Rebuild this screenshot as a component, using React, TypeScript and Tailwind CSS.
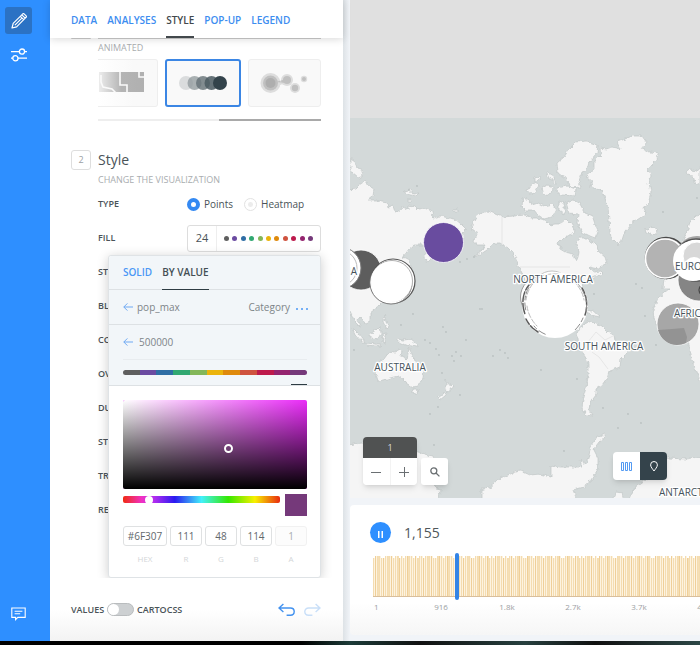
import React, { useState } from "react";

const palette = [
  "#5f5f5f", "#6b4ba1", "#2f6ea5", "#31a872", "#83b75a", "#ebb40c",
  "#df8a0c", "#cf533f", "#bd1a4c", "#94246f", "#75397a",
];

const tabs = ["DATA", "ANALYSES", "STYLE", "POP-UP", "LEGEND"];
const moreRows = [
  { short: "ST", name: "Stroke" },
  { short: "BL", name: "Blending" },
  { short: "CO", name: "Column" },
  { short: "OV", name: "Overlap" },
  { short: "DU", name: "Duration" },
  { short: "ST", name: "Steps" },
  { short: "TR", name: "Trails" },
  { short: "RE", name: "Resolution" },
];

function Rail() {
  return (
    <nav className="flex w-[50px] shrink-0 flex-col items-start bg-[#2e8fff] pt-[7px] pb-5 pl-[5px]">
      <button aria-label="Edit" className="flex h-[27px] w-[27px] items-center justify-center rounded-[3px] bg-[#2b72c4]">
        <svg width="16" height="16" viewBox="0 0 16 16" fill="none" stroke="white" strokeWidth="1.2" strokeLinejoin="round">
          <path d="M1 15l1.2-4.6L10.8 1.8l3.4 3.4L5.6 13.8zM9.3 3.3l3.4 3.4M10.8 1.8l.9-.9c.5-.4 1-.4 1.4 0l2 2c.4.4.4 1 0 1.4l-.9.9M3.900 12.100l7-7" />
        </svg>
      </button>
      <button aria-label="Settings" className="mt-[7px] flex h-[27px] w-[27px] items-center justify-center">
        <svg width="16" height="14" viewBox="0 0 16 14" fill="none" stroke="white" strokeWidth="1.3">
          <circle cx="11" cy="3.6" r="2.6" />
          <circle cx="4.4" cy="10.2" r="2.6" />
          <path d="M0 3.6h8.4M13.6 3.6H16M0 10.2h1.8M7 10.2h9" />
        </svg>
      </button>
      <button aria-label="Feedback" className="mt-auto flex w-[27px] items-center justify-center">
        <svg width="15" height="14" viewBox="0 0 15 14" fill="none" stroke="white" strokeWidth="1.1">
          <path d="M.8 1h13.4v9.4H6.8L4.6 12.6v-2.2H.8zM3.6 4.3h7.8M3.6 6.8h5.6" />
        </svg>
      </button>
    </nav>
  );
}

function AggregationCards() {
  return (
    <div className="mt-1 ml-[27px] flex h-12 gap-[7px]">
      <button aria-label="Administrative areas" className="h-full w-[60px] shrink-0 rounded-r-[3px] border border-l-0 border-[#eeeeee] bg-linear-to-r from-white to-[#f9f9f9] to-60%">
        <svg width="58" height="46" viewBox="0 0 58 46">
          <defs>
            <linearGradient id="areas" x1="0" x2="1" y1="0" y2="0">
              <stop offset="0" stopColor="#ececec" />
              <stop offset="0.5" stopColor="#b4b4b4" />
              <stop offset="1" stopColor="#b0b0b0" />
            </linearGradient>
          </defs>
          <path d="M1 12h45v20H1z" fill="url(#areas)" />
          <path d="M22 11v14h7v8M3 15v7l2 5 9 2 4 4M41 11v6h6" fill="none" stroke="#fafafa" strokeWidth="1.6" />
        </svg>
      </button>
      <button aria-label="Animated" className="flex h-full flex-1 items-center justify-center rounded-[3px] border-2 border-[#3b86e4] bg-[#f9f9f9]">
        <svg width="48" height="14" viewBox="0 0 48 14">
          <circle cx="7" cy="7" r="7" fill="#dadcdd" />
          <circle cx="15.5" cy="7" r="7" fill="#8d9799" opacity=".75" />
          <circle cx="24" cy="7" r="7" fill="#647176" opacity=".8" />
          <circle cx="32.5" cy="7" r="7" fill="#4b5b62" opacity=".85" />
          <circle cx="41" cy="7" r="7" fill="#33434b" />
        </svg>
      </button>
      <button aria-label="Pixel" className="flex h-full flex-1 items-center justify-center rounded-[3px] border border-[#eeeeee] bg-[#f9f9f9]">
        <svg width="48" height="22" viewBox="0 0 48 22" fill="#8c8c8c">
          <g opacity=".25">
            <circle cx="10.500" cy="11" r="10" />
            <circle cx="27" cy="8" r="6" />
            <circle cx="35" cy="16" r="5" />
            <circle cx="44" cy="7" r="3.2" />
            <path d="M18 9q4 3 6-1v5q-3-2-6 2z" />
          </g>
          <g opacity=".35">
            <circle cx="10.500" cy="11" r="7.5" />
            <circle cx="27" cy="8" r="4" />
            <circle cx="35" cy="16" r="3.2" />
            <circle cx="44" cy="7" r="2" />
            <path d="M16 10l10-3v4z" />
          </g>
          <circle cx="10.500" cy="11" r="5" opacity=".35" />
        </svg>
      </button>
    </div>
  );
}

function BackArrow() {
  return (
    <svg width="10" height="8" viewBox="0 0 10 8" fill="none" stroke="#6fa9f3" strokeWidth="1">
      <path d="M10 4H.8M4.4.4L.8 4l3.6 3.6" />
    </svg>
  );
}

const colorFields = [
  { label: "HEX", value: "#6F307", box: "w-11" },
  { label: "R", value: "111", box: "w-8" },
  { label: "G", value: "48", box: "w-8" },
  { label: "B", value: "114", box: "w-8" },
  { label: "A", value: "1", box: "w-8" },
];

function ColorPopup() {
  const [hue, setHue] = useState(15);
  return (
    <div className="absolute top-full right-0 z-10 w-[213px] rounded-[3px] border border-[#dfe3e6] bg-white font-normal shadow-[0_2px_12px_rgba(0,0,0,0.2)]">
      <div className="rounded-t-[3px] bg-[#f2f6f9]">
        <div className="flex h-[34px] gap-[10px] border-b border-[#dde1e4] pr-[13px] pl-[14px] text-[10px] font-semibold">
          <button className="text-[#4a97f5]">SOLID</button>
          <button className="-mb-px border-b border-[#2e3c43] text-[#434e54]">BY VALUE</button>
        </div>
        <div className="flex h-[35px] items-center border-b border-[#dde1e4] pr-3 pl-[14px] text-[10px] text-[#7d8488]">
          <button aria-label="Back to column"><BackArrow /></button>
          <span className="ml-1 flex-1">pop_max</span>
          <span>Category</span>
          <button aria-label="More options" className="mt-1 ml-[6px] flex gap-[3px]">
            <i className="h-[2px] w-[2px] rounded-full bg-[#4a97f5]" />
            <i className="h-[2px] w-[2px] rounded-full bg-[#4a97f5]" />
            <i className="h-[2px] w-[2px] rounded-full bg-[#4a97f5]" />
          </button>
        </div>
        <div className="mr-[13px] ml-[14px] flex h-[35px] items-center gap-[6px] border-b border-[#e8ecef] text-[10px] text-[#7d8488]">
          <button aria-label="Back to values"><BackArrow /></button>
          500000
        </div>
        <div className="flex h-[26px] flex-col justify-between border-b border-[#dde1e4] pr-[13px] pl-[14px]">
          <div className="mt-[10px] flex h-[5px] overflow-hidden rounded-full">
            {palette.map((c) => <span key={c} className="flex-1" style={{ backgroundColor: c }} />)}
          </div>
          <span className="h-px w-4 self-end bg-[#2e3c43]" />
        </div>
      </div>
      <div className="pt-[14px] pr-[13px] pl-[14px]">
        <div className="relative h-[89px] rounded-[2px] bg-[#ea2cf8]">
          <div className="absolute inset-0 rounded-[2px] bg-linear-to-r from-white to-transparent" />
          <div className="absolute inset-0 rounded-[2px] bg-linear-to-t from-black to-transparent" />
          <span className="absolute top-[44px] left-[101px] h-[9px] w-[9px] rounded-full border-2 border-white" />
        </div>
        <div className="mt-[5px] flex justify-between">
          <input
            type="range"
            aria-label="Hue"
            value={hue}
            onChange={(e) => setHue(Number(e.target.value))}
            className="mt-[2px] h-[7px] w-[157px] appearance-none rounded-[2px] bg-[linear-gradient(to_right,#f02a10,#f031c4_12%,#b02cf0_20%,#2a1af0_33%,#42f0fa_50%,#35e800_67%,#f8f000_84%,#e82a10)] [&::-webkit-slider-thumb]:h-[8px] [&::-webkit-slider-thumb]:w-[8px] [&::-webkit-slider-thumb]:appearance-none [&::-webkit-slider-thumb]:rounded-full [&::-webkit-slider-thumb]:bg-white"
          />
          <span className="h-[22px] w-[22px] bg-[#75397a]" />
        </div>
        <div className="mt-[10px] flex justify-between pb-3">
          {colorFields.map((f) => (
            <label key={f.label} className={`flex flex-col-reverse items-center gap-[7px] text-[8px] leading-3 text-[#d3d6d8] ${f.box}`}>
              {f.label}
              <input
                defaultValue={f.value}
                disabled={f.label === "A"}
                className="h-5 w-full rounded-[3px] border border-[#dfe1e2] bg-white text-center text-[10px] text-[#62686c] disabled:border-[#f1f1f1] disabled:bg-[#fcfcfc] disabled:text-[#aaaeb0]"
              />
            </label>
          ))}
        </div>
      </div>
    </div>
  );
}

const rowClass = "flex h-[34px] items-center text-[9px] font-semibold text-[#4a5358]";
const radioClass = "h-[13px] w-[13px] appearance-none rounded-full border border-[#e2e2e2] bg-[radial-gradient(#ececec_2px,white_3px)] checked:border-4 checked:border-[#3489f2] checked:bg-white checked:bg-none";

function StylePanel() {
  return (
    <section className="flex w-[293px] shrink-0 flex-col bg-white">
      <header className="z-20 flex h-[38px] shrink-0 gap-[10px] bg-white pl-[21px] text-[10px] font-semibold shadow-[0_1px_8px_rgba(0,0,0,0.16)]">
        {tabs.map((t) => (
          <button
            key={t}
            className={`border-b-2 pt-1 ${t === "STYLE" ? "border-[#42484c] text-[#42484c]" : "border-transparent text-[#3d8df0]"}`}
          >
            {t}
          </button>
        ))}
      </header>

      <div className="min-h-0 flex-1 overflow-hidden pr-[22px] pl-[21px]">
        <div className="flex h-[3px] items-start justify-between">
          <span className="h-px w-5 rounded-b bg-[#cccccc]" />
          <span className="h-px w-[223px] bg-[#cccccc]" />
        </div>
        <p className="ml-[27px] text-[9px] leading-[14px] text-[#a9adaf]">ANIMATED</p>
        <AggregationCards />
        <div className="mt-3 ml-[27px] flex h-[2px] bg-[#eeeeee]">
          <span className="ml-auto h-full w-[102px] bg-[#a9a9a9]" />
        </div>

        <div className="mt-[29px] flex items-center gap-[7px]">
          <span className="flex h-5 w-5 items-center justify-center rounded-[3px] border border-[#dedede] text-[9px] text-[#9ba0a3]">2</span>
          <h2 className="text-sm leading-5 text-[#4a5358]">Style</h2>
        </div>
        <div className="ml-[27px]">
          <p className="mt-[3px] text-[9px] leading-[14px] text-[#a9adaf]">CHANGE THE VISUALIZATION</p>
          <div className={rowClass} role="radiogroup" aria-label="Type">
            <span className="w-[89px]">TYPE</span>
            <label className="flex items-center gap-1 text-[10px] font-normal">
              <input type="radio" name="type" defaultChecked className={radioClass} />
              Points
            </label>
            <label className="ml-[11px] flex items-center gap-1 text-[10px] font-normal">
              <input type="radio" name="type" className={radioClass} />
              Heatmap
            </label>
          </div>
          <div className={`relative ${rowClass}`}>
            <span className="w-[89px] shrink-0">FILL</span>
            <div className="flex h-[27px] flex-1 rounded-[3px] border border-[#dddddd]">
              <button className="w-[29px] border-r border-[#eeeeee] text-[11px] font-normal">24</button>
              <button aria-label="Fill colours" className="flex flex-1 items-center justify-between px-[7px]">
                {palette.map((c) => <span key={c} className="h-[5px] w-[5px] rounded-full" style={{ backgroundColor: c }} />)}
              </button>
            </div>
            <ColorPopup />
          </div>
          {moreRows.map((r) => (
            <div key={r.name} className={rowClass} title={r.name}>{r.short}</div>
          ))}
        </div>
      </div>

      <footer className="flex h-[63px] shrink-0 items-center bg-linear-to-b from-white from-50% to-[#f3f3f3] pr-[22px] pl-[21px] text-[9px] font-semibold text-[#4a5358]">
        <label className="flex items-center gap-[3px]">
          VALUES
          <input
            type="checkbox"
            className="h-[13px] w-[27px] appearance-none rounded-full border border-[#b9bcbe] bg-[#cdd0d2] before:block before:h-[11px] before:w-[11px] before:rounded-full before:bg-white checked:bg-[#3489f2] checked:before:ml-[14px]"
          />
          CARTOCSS
        </label>
        <button aria-label="Undo" className="ml-auto">
          <svg width="17" height="14" viewBox="0 0 17 14" fill="none" stroke="#4392ef" strokeWidth="1.4">
            <path d="M5.4 1L1 5l4.4 4M1 5h11.4c2.2 0 3.8 1.5 3.8 3.6s-1.500 3.700-3.800 3.700H8.600" />
          </svg>
        </button>
        <button aria-label="Redo" className="ml-[9px]">
          <svg width="17" height="14" viewBox="0 0 17 14" fill="none" stroke="#c9dff8" strokeWidth="1.4">
            <path d="M11.600 1L16 5l-4.400 4M16 5H4.600C2.400 5 .8 6.500.8 8.600s1.500 3.700 3.800 3.700H8.400" />
          </svg>
        </button>
      </footer>
    </section>
  );
}

const land = [
  // Eurasia
  "M348 190 355 189 359 185 365 181 369 186 374 189 373 196 368 200 376 200 382 202 388 203 389 208 393 206 395 212 401 210 403 207 409 210 409 205 415 206 418 209 424 208 432 211 433 218 440 216 449 218 455 219 461 224 466 229 462 233 465 238 458 240 440 245 433 252 430 260 427 263 425 258 425 250 424 245 414 245 408 250 403 257 409 260 412 268 404 285 392 300 384 301 378 307 370 313 370 322 366 324 360 317 357 320 361 328 355 322 350 311 348 312z",
  // arctic islands north of Siberia
  "M350 158 354 160 358 168 362 170 363 176 358 178 352 173 350 170z",
  "M403 191 410 190 413 194 419 193 416 196 407 194zM407 200l4 0 0 2-4 0zM454 210l4-1 0 2-4 0z",
  // Indonesia, Philippines and New Guinea
  "M352 327 358 333 365 342 362 342 355 334zM366 343 376 344 383 346 376 346 366 345zM370 334 376 330 380 326 381 333 378 339 372 338zM382 334 386 333 384 339 386 343 383 342zM384 314 386 322 389 327 387 329 383 322z",
  "M397 339 404 340 411 339 416 343 419 348 412 346 405 345 399 342z",
  // Australia
  "M378 381 376 374 373 368 377 363 384 359 389 352 395 353 398 349 402 351 401 356 407 359 409 348 412 354 414 360 420 364 424 370 423 378 418 386 412 387 406 383 402 379 398 376 390 378 384 380z",
  "M412 389l6 0-1 5-3 0zM446 380 449 385 454 386 450 391 446 390zM447 391 446 395 440 400 438 398 443 394z",
  // North America
  "M472 225 475 218 480 214 488 211 495 214 502 217 514 216 525 215 530 218 537 218 545 220 550 225 555 224 560 224 566 219 571 224 575 231 572 235 564 237 558 243 560 249 565 252 573 254 576 262 578 257 579 251 577 244 579 238 586 238 591 242 597 244 598 251 605 257 607 264 598 269 589 267 594 272 600 271 603 274 594 277 588 280 582 286 576 293 573 305 565 320 580 328 578 331 560 323 545 315 528 290 524 277 518 265 514 254 508 248 500 243 494 243 487 250 481 254 474 257 482 250 485 245 477 245 473 240 479 233 473 230z",
  // Canadian archipelago
  "M558 173 557 163 564 157 570 148 576 142 586 141 598 145 597 153 589 162 587 170 582 172 579 181 581 187 570 188 566 178 562 176z",
  "M566 202 573 200 580 204 585 213 592 216 595 225 598 230 595 238 590 236 582 232 577 223 578 214 569 213z",
  "M523 198 530 200 532 205 538 203 544 206 553 204 556 209 552 217 544 219 538 215 534 210 525 210 522 207z",
  "M526 190 534 183 539 185 535 193 529 194zM541 188l7-3 5 2-1 6-9 2zM546 172l7 4 3 7-6-3zM557 188l10-2 9 3-1 7-13-1-6-3zM559 201l5 2 0 12-5-4zM535 178l5-2 0 4-5 2z",
  // Greenland
  "M586 176 594 170 594 162 601 155 600 148 606 149 612 147 620 149 617 142 625 139 632 136 642 136 647 143 642 149 650 152 659 153 655 161 648 168 651 175 649 183 651 192 648 203 644 208 646 213 640 218 632 223 625 231 622 240 618 245 611 238 610 230 609 220 608 208 605 198 601 189 590 187 592 181z",
  "M645 229l3 1 2-2 6 0 1 4-5 3-6-2zM686 171l5-2 4 2 5-3 0 15-4 2-3-9-6-1z",
  // South America
  "M580 350 577 340 577 335 583 324 591 321 598 325 603 327 608 332 614 335 615 341 622 343 627 346 628 352 621 359 620 367 609 371 607 378 602 385 596 389 596 395 590 403 589 410 593 416 586 415 582 408 583 398 586 388 588 376 588 364 586 358z",
  "M583 311l10 0 7 6-6-1-7-3z",
  // Europe and Africa
  "M705 212 696 216 690 222 686 234 682 242 690 250 690 262 680 265 676 276 664 279 663 288 670 288 658 298 653 310 654 318 661 331 672 335 684 333 688 345 691 354 693 364 700 380 705 380z",
  // Antarctica
  "M348 445 362 443 380 445 400 444 417 452 432 456 436 465 434 480 436 489 441 490 438 500 348 500z",
  "M482 500 482 489 490 488 495 482 500 478 508 475 515 472 521 471 530 475 540 474 551 477 551 465 560 467 570 467 582 467 580 460 586 464 589 455 591 446 597 438 607 433 600 442 594 450 598 458 598 470 592 480 584 487 573 490 577 500zM612 500l4-8 6 1 2 7zM629 500 634 488 645 480 653 473 658 462 668 458 685 459 705 456 705 500z",
];

const specks = [
  [409, 190], [417, 186], [425, 340], [430, 343], [436, 349], [439, 355], [443, 327], [446, 332], [452, 356],
  [456, 352], [466, 340], [482, 309], [493, 356], [500, 350], [505, 353], [508, 358], [413, 314], [401, 325],
  [442, 373], [460, 395], [438, 407], [430, 414], [434, 445], [541, 370], [577, 379], [603, 408], [628, 414],
  [663, 212], [697, 198], [636, 284], [642, 288], [594, 294], [645, 316], [656, 345], [564, 451], [618, 428],
  [467, 259], [474, 257], [460, 262], [480, 309], [641, 423], [354, 350], [461, 356], [454, 361],
];

function MapCanvas() {
  return (
    <svg className="absolute inset-0 h-full w-full" viewBox="350 0 350 498" preserveAspectRatio="xMinYMin slice" aria-label="World map">
      <defs>
        <filter id="coast" x="-5%" y="-5%" width="110%" height="110%" colorInterpolationFilters="sRGB">
          <feTurbulence type="fractalNoise" baseFrequency="0.22" numOctaves="2" seed="4" />
          <feDisplacementMap in="SourceGraphic" scale="5" xChannelSelector="R" yChannelSelector="G" />
        </filter>
      </defs>
      <path d="M350 0h350v118H350z" fill="#e0e0e0" />
      <path d="M350 118h350v380H350z" fill="#d3d9d9" />
      <g filter="url(#coast)" fill="#f5f5f5" stroke="#c0c6c6" strokeWidth=".7">
        {land.map((d) => <path key={d.slice(0, 24)} d={d} />)}
      </g>
      <g fill="#b9c0c0">
        {specks.map(([x, y], i) => <circle key={i} cx={x} cy={y} r={0.9} />)}
      </g>
      <path d="M502 217v28M520 267h50M588 342l8-10 9 8 8-4M592 352l7 5 9 12" fill="none" stroke="#dfdfdf" strokeWidth=".7" />

      <g stroke="white">
        <circle cx="443.500" cy="242.500" r="20" fill="#694c9f" strokeWidth=".8" />
        <circle cx="361" cy="270" r="20" fill="#5d5d5d" strokeWidth=".8" />
        <circle cx="340" cy="268" r="21" fill="#ffffff" stroke="#777777" strokeWidth="1" />
        <circle cx="339" cy="268" r="18" fill="#ffffff" stroke="#bbbbbb" strokeWidth="1" />
      </g>
      <g fill="white">
        <circle cx="393" cy="281" r="22" stroke="#555555" strokeWidth="1.200" />
        <circle cx="391" cy="283" r="21" stroke="#777777" strokeWidth="1" />
        <circle cx="392" cy="281" r="20.500" stroke="#b0b0b0" strokeWidth="1" />
        <circle cx="391" cy="282" r="20" stroke="white" />
      </g>

      <circle cx="541" cy="297" r="20.500" fill="white" stroke="#9a9a9a" />
      <circle cx="552" cy="291" r="20" fill="white" stroke="#c4c4c4" />
      <circle cx="555" cy="305" r="33" fill="white" />
      <g fill="none" strokeLinecap="round">
        <path d="M529 285C523 292 521 303 525 314M582 288c5 8 6 18 3 27M526 319c3 6 7 10 12 13" stroke="#5b5b5b" strokeWidth="1.500" strokeDasharray="6 2 3 1" />
        <path d="M533 282c-7 7-10 18-7 29M578 284c7 8 10 18 8 28M534 326c3 4 8 7 13 9M583 318c-2 5-5 9-8 12" stroke="#8d8d8d" strokeDasharray="4 3 7 2" />
        <path d="M538 279c-7 5-11 13-12 21M573 281c6 5 10 12 11 19M527 306c1 8 5 15 10 20M528 285c8-8 18-12 30-11" stroke="#bcbcbc" strokeDasharray="5 2" />
      </g>

      <g>
        <circle cx="699" cy="280" r="21" fill="#858585" stroke="white" strokeWidth=".8" />
        <circle cx="706" cy="290" r="7" fill="#9b9b9b" stroke="#333333" />
        <circle cx="666" cy="258" r="20.500" fill="#b3b3b3" stroke="#4b4b4b" strokeWidth="1.500" />
        <circle cx="665" cy="258.500" r="19.500" fill="#b3b3b3" stroke="white" strokeWidth="1.600" />
        <circle cx="697" cy="257" r="21" fill="#a5a5a5" />
        <circle cx="696" cy="260" r="21" fill="white" stroke="#555555" strokeWidth="1.500" />
        <circle cx="693" cy="261" r="20" fill="white" />
        <circle cx="697" cy="256" r="14" fill="#d8d8d8" stroke="white" />
        <circle cx="694" cy="267" r="10" fill="white" />
        <circle cx="678" cy="324" r="21" fill="#a7a7a7" stroke="white" strokeWidth=".8" />
        <path d="M658 330l14-1 12-1 3 9-1 6c-12 5-24 0-28-13z" fill="#939393" />
      </g>

      <g
        className="font-['Open_Sans','Noto_Sans',sans-serif] text-[10px] font-medium"
        fill="#46535b"
        stroke="white"
        strokeWidth="2.500"
        paintOrder="stroke"
        strokeLinejoin="round"
        textAnchor="middle"
      >
        <text x="400" y="371">AUSTRALIA</text>
        <text x="553" y="283">NORTH AMERICA</text>
        <text x="604" y="350">SOUTH AMERICA</text>
        <text x="675" y="270" textAnchor="start">EUROPE</text>
        <text x="674" y="317" textAnchor="start">AFRICA</text>
        <text x="659" y="496" textAnchor="start">ANTARCTICA</text>
        <text x="357" y="275" textAnchor="end">ASIA</text>
      </g>
    </svg>
  );
}

function MapView() {
  return (
    <div className="relative min-h-0 flex-1 overflow-hidden">
      <MapCanvas />
      <div className="absolute bottom-[13px] left-[13px] flex items-end gap-1">
        <div className="w-[54px] overflow-hidden rounded-[4px] shadow-md">
          <div className="flex h-[21px] items-center justify-center bg-[#505252] text-[9px] text-[#dddddd]">1</div>
          <div className="flex h-[27px] bg-white text-[#6a6f72]">
            <button aria-label="Zoom out" className="flex flex-1 items-center justify-center border-r border-[#f3f3f3]">
              <svg width="10" height="10" viewBox="0 0 10 10" stroke="currentColor"><path d="M0 5.500h10" /></svg>
            </button>
            <button aria-label="Zoom in" className="flex flex-1 items-center justify-center">
              <svg width="10" height="10" viewBox="0 0 10 10" stroke="currentColor"><path d="M0 5.500h10M5.500 0v10" /></svg>
            </button>
          </div>
        </div>
        <button aria-label="Search" className="flex h-[27px] w-[27px] items-center justify-center rounded-[3px] bg-white text-[#6a6f72] shadow-md">
          <svg width="10" height="10" viewBox="0 0 10 10" fill="none" stroke="currentColor" strokeWidth="1.300">
            <circle cx="3.800" cy="3.800" r="3" /><path d="M6 6l3.400 3.400" />
          </svg>
        </button>
      </div>
      <div className="absolute right-[33px] bottom-[18px] flex h-7 overflow-hidden rounded-[4px] shadow-md">
        <button aria-label="Widgets" className="flex w-[27px] items-center justify-center bg-white">
          <svg width="11" height="9" viewBox="0 0 11 9" fill="none" stroke="#3f8ff0" strokeWidth=".9"><path d="M.5.500h2v8h-2zM4.500.500h2v8h-2zM8.500.500h2v8h-2z" /></svg>
        </button>
        <button aria-label="Map" className="flex w-[27px] items-center justify-center bg-[#34434b]">
          <svg width="8" height="11" viewBox="0 0 8 11" fill="none" stroke="white"><path d="M4 10C3 8.500.600 6 .600 3.900a3.400 3.400 0 0 1 6.800 0C7.400 6 5 8.500 4 10z" /></svg>
        </button>
      </div>
    </div>
  );
}

const ticks = ["1", "916", "1.8k", "2.7k", "3.7k", "4.6k"];

function Timeline() {
  return (
    <div className="shrink-0 bg-[#f1f4f8] pt-[7px] pb-[6px]">
      <div className="h-[130px] overflow-hidden rounded-l-[4px] bg-linear-to-b from-white from-75% to-[#f6f6f6] pt-[17px] pl-5">
        <div className="flex items-center gap-[13px]">
          <button aria-label="Pause" className="flex h-[21px] w-[21px] items-center justify-center rounded-full bg-[#2e8fff]">
            <svg width="5" height="7" viewBox="0 0 5 7" fill="white" className="mt-1"><path d="M0 0h1.500v7H0zM3.500 0H5v7H3.500z" /></svg>
          </button>
          <span className="text-sm text-[#4f575b]">1,155</span>
        </div>
        <div className="relative mt-[10px] ml-[3px] h-[47px]">
          <svg className="absolute inset-0 h-full w-full" shapeRendering="crispEdges" aria-label="Histogram">
            {Array.from({ length: 600 }, (_, i) => {
              const top = (i * 7) % 5 === 0 || i % 9 === 4 ? 5 : 3;
              return (
                <g key={i}>
                  <rect x={i * 2} y={top} width={2} height={44 - top} fill={i % 5 === 2 ? "#f5dfb6" : "#fdf3e0"} />
                  <rect x={i * 2} y={top} width={1} height={44 - top} fill={i % 4 === 1 ? "#efcf98" : "#f4dcb0"} />
                </g>
              );
            })}
            <rect y="43" width="100%" height="1" fill="#d9bf9c" />
          </svg>
          <span className="absolute top-0 left-[82px] h-full w-1 rounded-full bg-[#3384e6]" />
        </div>
        <div className="mt-px flex text-[8px] leading-3 text-[#9ba0a3]">
          {ticks.map((t) => <span key={t} className="w-[66px] shrink-0 text-center first:w-[38px] first:pl-[4px] first:text-left">{t}</span>)}
        </div>
      </div>
    </div>
  );
}

export default function App() {
  return (
    <div className="flex h-screen flex-col bg-black font-['Open_Sans','Noto_Sans',sans-serif]">
      <main className="flex min-h-0 flex-1 overflow-hidden bg-[#f1f4f8]">
        <Rail />
        <StylePanel />
        <div className="w-[7px] shrink-0 bg-linear-to-r from-[#dde2e6] to-[#f1f4f8]" />
        <div className="flex min-w-0 flex-1 flex-col">
          <MapView />
          <Timeline />
        </div>
      </main>
      <div className="h-1 shrink-0 bg-[linear-gradient(to_right,black_43%,#1c3b38_50%,#111_60%,#27403f_75%,#101010_85%,#2c4746)]" />
    </div>
  );
}
